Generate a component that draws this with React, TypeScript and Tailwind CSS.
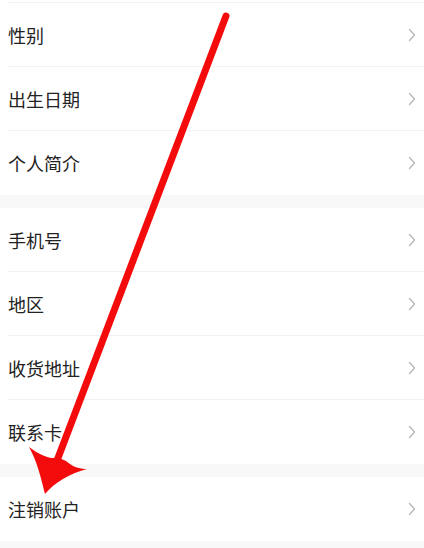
import React from 'react';

const groups: string[][] = [
  ['性别', '出生日期', '个人简介'],
  ['手机号', '地区', '收货地址', '联系卡'],
  ['注销账户'],
];

function Chevron() {
  return (
    <svg width="8" height="14" viewBox="0 0 8 14" fill="none" stroke="#b8b8b8" strokeWidth="1.4" strokeLinecap="round" strokeLinejoin="round">
      <polyline points="1.5 1.5 6.5 7 1.5 12.5" />
    </svg>
  );
}

function Row({ label, last }: { label: string; last: boolean }) {
  return (
    <div className="bg-white pl-2">
      <div className={`h-[64px] flex items-center justify-between pr-[8px] ${last ? '' : 'border-b border-[#f1f1f1]'}`}>
        <span className="text-[18px] text-[#222] leading-none">{label}</span>
        <Chevron />
      </div>
    </div>
  );
}

export default function App() {
  return (
    <div
      className="relative w-[424px] h-[548px] overflow-hidden bg-[#f8f8f8]"
      style={{ fontFamily: '"Noto Sans CJK SC", "Noto Sans", sans-serif' }}
    >
      {/* 上一行的尾部 */}
      <div className="bg-white pl-2">
        <div className="h-[3px] border-b border-[#f1f1f1]" />
      </div>

      <div className="flex flex-col gap-[13px]">
        {groups.map((g, gi) => (
          <div key={gi} className="flex flex-col">
            {g.map((label, i) => (
              <Row key={label} label={label} last={i === g.length - 1} />
            ))}
          </div>
        ))}
      </div>

      {/* 红色箭头 */}
      <svg className="absolute left-0 top-0 pointer-events-none" width="424" height="548" viewBox="0 0 424 548">
        <line x1="226" y1="16" x2="58" y2="458" stroke="#f40b0b" strokeWidth="7" strokeLinecap="round" />
        <path
          d="M 29 447 C 40 455, 50 460, 57 457 L 66 461 C 73 467, 79 469, 87 469 C 69 474, 55 482, 45 494 C 41 478, 37 461, 29 447 Z"
          fill="#f40b0b"
        />
      </svg>
    </div>
  );
}
